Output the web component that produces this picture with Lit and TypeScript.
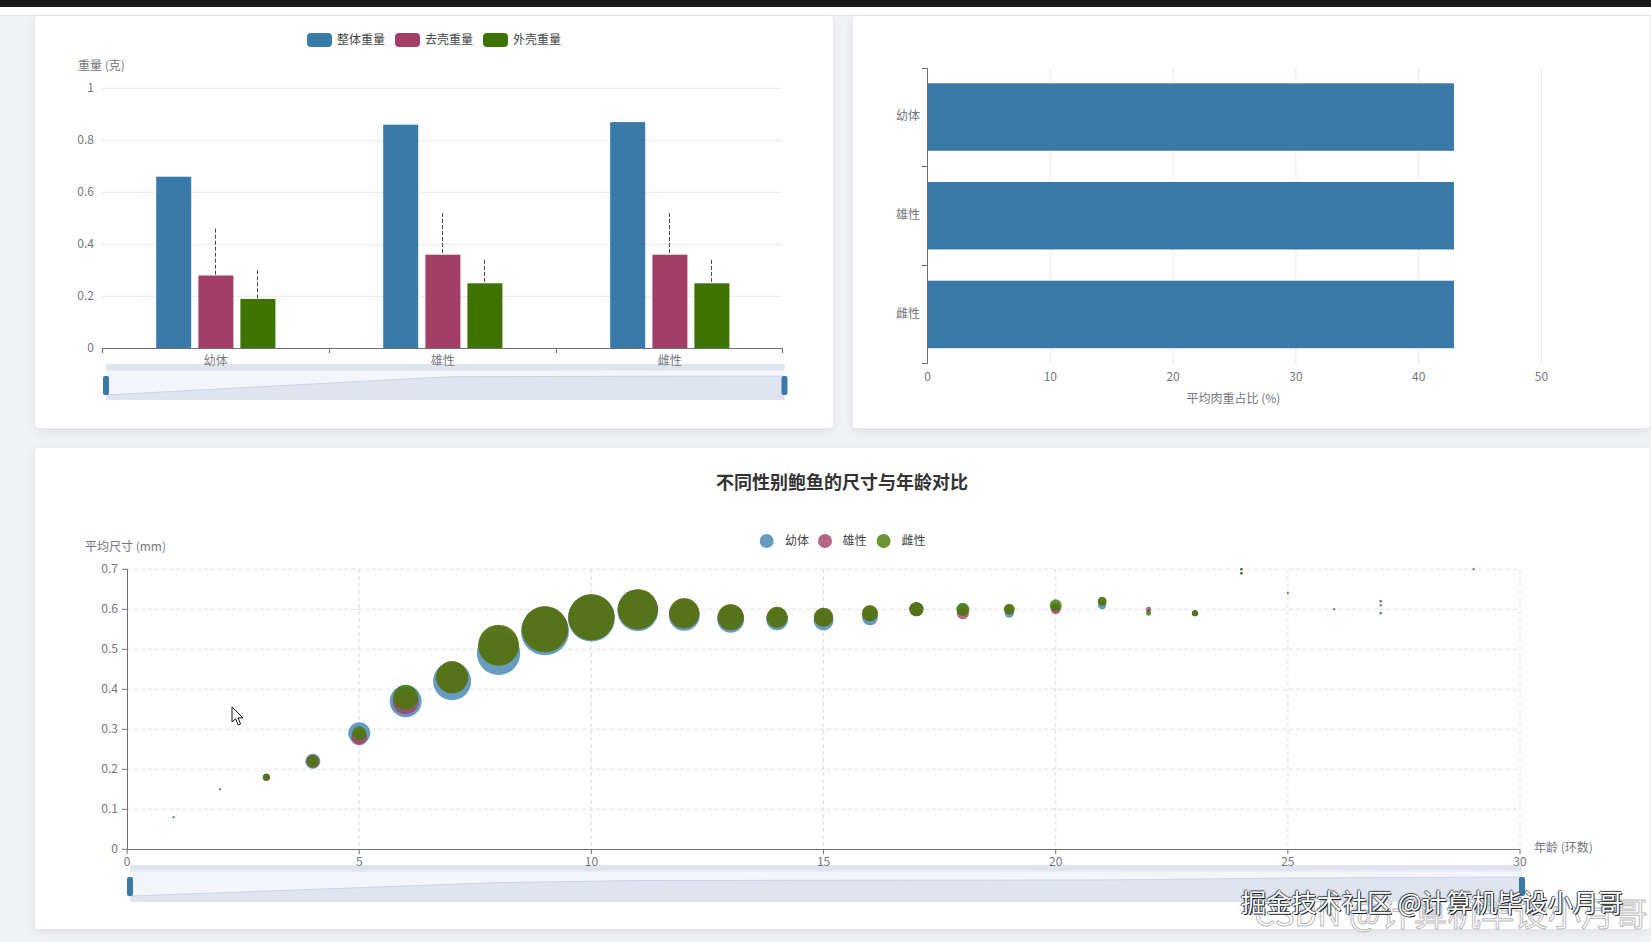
import { css, html, LitElement, svg } from "lit";
import { customElement } from "lit/decorators.js";

const BLUE = "#3a7aa8";
const MAROON = "#a33f66";
const GREEN = "#3f7300";
const BUBBLE_BLUE = "#4083b0";
const BUBBLE_GREEN = "#457c00";
const GRAY = "#6e7079";

// age, value, radius
type Bubble = [number, number, number];

const blueBubbles: Bubble[] = [
	[1, 0.08, 1], [2, 0.15, 1], [3, 0.18, 3.5], [4, 0.22, 7.5], [5, 0.29, 11],
	[6, 0.37, 16], [7, 0.42, 19], [8, 0.49, 21.7], [9, 0.545, 24], [10, 0.578, 23.5],
	[11, 0.597, 20.5], [12, 0.585, 15.5], [13, 0.575, 13.5], [14, 0.575, 11], [15, 0.572, 10],
	[16, 0.58, 8], [17, 0.6, 7], [18, 0.6, 6], [19, 0.59, 4.5], [20, 0.605, 5],
	[21, 0.61, 4], [22, 0.595, 2], [23, 0.59, 3], [24, 0.7, 1.3], [25, 0.64, 1],
	[26, 0.6, 1], [27, 0.62, 1.2], [27, 0.59, 1.2], [29, 0.7, 1],
];
const maroonBubbles: Bubble[] = [
	[3, 0.18, 3.5], [4, 0.22, 6.5], [5, 0.28, 8], [6, 0.37, 13], [7, 0.43, 16],
	[8, 0.51, 20], [9, 0.55, 23], [10, 0.58, 23], [11, 0.6, 20], [12, 0.59, 15],
	[13, 0.58, 13], [14, 0.58, 10.5], [15, 0.58, 9.5], [16, 0.59, 8], [17, 0.6, 7],
	[18, 0.59, 6], [19, 0.6, 5], [20, 0.6, 5], [21, 0.62, 4], [22, 0.6, 2.5],
	[23, 0.59, 3], [27, 0.61, 1.2], [24, 0.69, 1.3],
];
const greenBubbles: Bubble[] = [
	[1, 0.08, 1], [2, 0.15, 1], [3, 0.18, 3.5], [4, 0.22, 6], [5, 0.29, 7],
	[6, 0.38, 12.5], [7, 0.43, 16], [8, 0.51, 20.5], [9, 0.55, 23], [10, 0.58, 23],
	[11, 0.6, 20], [12, 0.59, 15], [13, 0.58, 13], [14, 0.58, 10.5], [15, 0.58, 9.5],
	[16, 0.59, 8], [17, 0.6, 7], [18, 0.6, 6.5], [19, 0.6, 5.5], [20, 0.61, 6],
	[21, 0.62, 4.5], [22, 0.59, 2.5], [23, 0.59, 3], [24, 0.7, 1.3], [24, 0.69, 1.3],
	[25, 0.64, 1], [26, 0.6, 1], [27, 0.62, 1], [27, 0.59, 1], [29, 0.7, 1],
];

// weight chart: whole, shelled and shell weight per group, with the top of each dashed line
const weightGroups = [
	{ name: "幼体", whole: 0.66, meat: 0.28, shell: 0.19, meatTop: 0.46, shellTop: 0.3 },
	{ name: "雄性", whole: 0.86, meat: 0.36, shell: 0.25, meatTop: 0.52, shellTop: 0.34 },
	{ name: "雌性", whole: 0.87, meat: 0.36, shell: 0.25, meatTop: 0.52, shellTop: 0.34 },
];

const wy = (v: number) => 348.3 - v * 260;
const bx = (age: number) => 127.1 + age * 46.43;
const by = (v: number) => 849.3 - v * 400;

@customElement("app-root")
export class AppRoot extends LitElement {
	static override styles = css`
		:host {
			display: block;
			position: relative;
			height: 942px;
			overflow: hidden;
			background: #f0f2f5;
			font-family: "Noto Sans CJK SC", "Noto Sans", sans-serif;
		}

		.top-bar {
			height: 7px;
			background: #1a1a1a;
		}

		.nav-strip {
			height: 8px;
			background: #ffffff;
			border-bottom: 1px solid #e2e4e6;
		}

		.grid {
			display: grid;
			grid-template-columns: 798px 797px;
			grid-template-rows: 412px 481px;
			column-gap: 20px;
			row-gap: 20px;
			padding-left: 35px;
		}

		.card {
			background: #ffffff;
			border-radius: 4px;
			box-shadow: 0 3px 12px rgba(0, 0, 0, 0.08);
			overflow: hidden;
		}

		.wide {
			grid-column: 1 / 3;
		}

		svg {
			display: block;
		}

		text {
			font-size: 12px;
			fill: #74767e;
			dominant-baseline: central;
			transform: translateY(-1.5px);
		}

		.legend-text {
			fill: #444444;
		}

		.title {
			font-size: 18px;
			font-weight: 700;
			fill: #333333;
		}

		.mark-back,
		.mark-front {
			position: absolute;
			white-space: nowrap;
			line-height: 1;
			pointer-events: none;
		}

		.mark-back {
			left: 1254px;
			top: 895px;
			font-size: 33.4px;
			color: #ffffff;
			-webkit-text-stroke: 1px #bcbcbc;
		}

		.mark-front {
			left: 1241px;
			top: 889px;
			font-size: 25.2px;
			color: #ffffff;
			text-shadow: 1px 1px 0 #222222, -1px 0 1px #444444, 0 -1px 1px #444444;
		}

		.cursor {
			position: absolute;
			left: 231px;
			top: 706px;
		}
	`;

	private weightChart() {
		const bars = weightGroups.map((g, i) => {
			const x = 156.2 + i * 227;
			const meatLine = Math.floor(x + 59.7) + 0.5;
			const shellLine = Math.floor(x + 101.7) + 0.5;
			return svg`
				<rect x=${x} y=${wy(g.whole)} width="35" height=${g.whole * 260} fill=${BLUE}></rect>
				<rect x=${x + 42.2} y=${wy(g.meat)} width="35" height=${g.meat * 260} fill=${MAROON}></rect>
				<rect x=${x + 84.2} y=${wy(g.shell)} width="35" height=${g.shell * 260} fill=${GREEN}></rect>
				<line x1=${meatLine} x2=${meatLine} y1=${wy(g.meatTop)} y2=${wy(g.meat)} stroke="#444" stroke-dasharray="4 2"></line>
				<line x1=${shellLine} x2=${shellLine} y1=${wy(g.shellTop)} y2=${wy(g.shell)} stroke="#444" stroke-dasharray="4 2"></line>
			`;
		});
		return html`
			<svg width="798" height="412" viewBox="35 16 798 412">
				${[["整体重量", 307, BLUE], ["去壳重量", 395, MAROON], ["外壳重量", 483, GREEN]].map(
					([label, x, color]) => svg`
						<rect x=${x} y="33" width="25" height="14" rx="4" fill=${color}></rect>
						<text class="legend-text" x=${(x as number) + 30} y="40">${label}</text>
					`,
				)}
				<text x="78" y="66">重量 (克)</text>
				${[0, 0.2, 0.4, 0.6, 0.8, 1].map(
					(v) => svg`
						<text x="94" y=${wy(v) - 0.5} text-anchor="end">${v}</text>
						${v ? svg`<line x1="102" x2="782.5" y1=${wy(v)} y2=${wy(v)} stroke="#e8e8e8"></line>` : ""}
					`,
				)}
				${bars}
				<path d="M102 348.5H782.5M102.5 348v5M329.5 348v5M556.5 348v5M782.5 348v5" stroke=${GRAY} fill="none"></path>
				${this.zoomBar(106, 784.5, 364, 400, "M106 395L450 376.7L784.5 376", 103, 781.5, 376)}
				${weightGroups.map(
					(g, i) => svg`<text x=${215.7 + i * 227} y="361" text-anchor="middle">${g.name}</text>`,
				)}
			</svg>
		`;
	}

	private ratioChart() {
		const x0 = 927.5;
		return html`
			<svg width="797" height="412" viewBox="853 16 797 412">
				${[10, 20, 30, 40, 50].map((v) => {
					const x = x0 + v * 12.28;
					return svg`<line x1=${x} x2=${x} y1="68" y2="364" stroke="#e8eaec"></line>`;
				})}
				${[
					[83.3, "幼体", 116],
					[182, "雄性", 215],
					[280.7, "雌性", 314],
				].map(
					([y, label, ly]) => svg`
						<rect x=${x0} y=${y} width="526.5" height="67.5" fill=${BLUE}></rect>
						<text x="920" y=${ly} text-anchor="end">${label}</text>
					`,
				)}
				<path d="M927.5 68V364M922 68.5h5M922 166.5h5M922 265.5h5M922 363.5h5" stroke=${GRAY} fill="none"></path>
				${[0, 10, 20, 30, 40, 50].map(
					(v) => svg`<text x=${x0 + v * 12.28} y="377" text-anchor="middle">${v}</text>`,
				)}
				<text x="1233.5" y="399" text-anchor="middle">平均肉重占比 (%)</text>
			</svg>
		`;
	}

	private bubbleChart() {
		const ticks = [0, 0.1, 0.2, 0.3, 0.4, 0.5, 0.6, 0.7];
		const ages = [0, 5, 10, 15, 20, 25, 30];
		return html`
			<svg width="1615" height="481" viewBox="35 448 1615 481">
				<text class="title" x="842" y="482" text-anchor="middle">不同性别鲍鱼的尺寸与年龄对比</text>
				${[["幼体", 766.7, BUBBLE_BLUE, 785], ["雄性", 825, MAROON, 842.5], ["雌性", 883.6, BUBBLE_GREEN, 901.5]].map(
					([label, cx, color, tx]) => svg`
						<circle cx=${cx} cy="541" r="7" fill=${color} fill-opacity="0.8"></circle>
						<text class="legend-text" x=${tx} y="541">${label}</text>
					`,
				)}
				<text x="85" y="547">平均尺寸 (mm)</text>
				${ticks.map(
					(v) => svg`
						<text x="118" y=${by(v) - 0.5} text-anchor="end">${v}</text>
						${v ? svg`<line x1="127" x2="1520" y1=${by(v)} y2=${by(v)} stroke="#dfdfdf" stroke-dasharray="4 3"></line>` : ""}
						<line x1="122" x2="127" y1=${by(v)} y2=${by(v)} stroke=${GRAY}></line>
					`,
				)}
				${ages.slice(1).map(
					(a) => svg`<line x1=${bx(a)} x2=${bx(a)} y1="569" y2="849" stroke="#dfdfdf" stroke-dasharray="4 3"></line>`,
				)}
				${[
					[blueBubbles, BUBBLE_BLUE],
					[maroonBubbles, MAROON],
					[greenBubbles, BUBBLE_GREEN],
				].map(([list, color]) =>
					(list as Bubble[]).map(
						([age, v, r]) => svg`<circle cx=${bx(age)} cy=${by(v)} r=${r} fill=${color as string} fill-opacity="0.8"></circle>`,
					),
				)}
				<path d="M127.5 569V849.5H1520" stroke=${GRAY} fill="none"></path>
				${this.zoomBar(130, 1522, 865, 902, "M130 896L351 888L496 882.7L640 880.5L1100 880L1300 878L1522 877", 127, 1519, 877)}
				${ages.map(
					(a) => svg`
						<line x1=${bx(a)} x2=${bx(a)} y1="849" y2="854" stroke=${GRAY}></line>
						<text x=${bx(a)} y="862" text-anchor="middle">${a}</text>
					`,
				)}
				<text x="1534" y="848">年龄 (环数)</text>
			</svg>
		`;
	}

	// echarts style slider: band, data shadow and the two blue handles
	private zoomBar(
		x1: number,
		x2: number,
		top: number,
		bottom: number,
		line: string,
		h1: number,
		h2: number,
		hTop: number,
	) {
		const width = x2 - x1;
		return svg`
			<rect x=${x1} y=${top} width=${width} height=${bottom - top} fill="#f3f5fa"></rect>
			<rect x=${x1} y=${top} width=${width} height="6.5" fill="#e0e4ef"></rect>
			<path d="${line}L${x2} ${bottom}L${x1} ${bottom}Z" fill="#e0e4ef"></path>
			<path d=${line} fill="none" stroke="#ccd3e6"></path>
			<rect x=${h1} y=${hTop} width="6" height="19" rx="2" fill=${BLUE}></rect>
			<rect x=${h2} y=${hTop} width="6" height="19" rx="2" fill=${BLUE}></rect>
		`;
	}

	override render() {
		return html`
			<div class="top-bar"></div>
			<div class="nav-strip"></div>
			<div class="grid">
				<div class="card">${this.weightChart()}</div>
				<div class="card">${this.ratioChart()}</div>
				<div class="card wide">${this.bubbleChart()}</div>
			</div>
			<div class="mark-back">CSDN @计算机毕设小月哥</div>
			<div class="mark-front">掘金技术社区 @计算机毕设小月哥</div>
			<svg class="cursor" width="13" height="20" viewBox="0 0 13 20">
				<path d="M1 1V16L4.6 12.8L7.2 19L9.6 18L7 11.9H12Z" fill="#fff" stroke="#111" stroke-width="1"></path>
			</svg>
		`;
	}
}

declare global {
	interface HTMLElementTagNameMap {
		"app-root": AppRoot;
	}
}
